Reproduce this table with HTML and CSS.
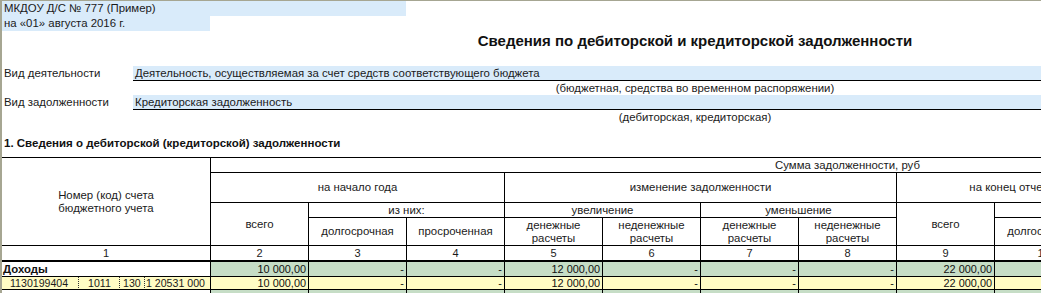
FILE: index.html
```html
<!DOCTYPE html>
<html lang="ru">
<head>
<meta charset="utf-8">
<title>Сведения по дебиторской и кредиторской задолженности</title>
<link rel="stylesheet" href="styles.css">
</head>
<body>
<div class="band band-org">МКДОУ Д/С № 777 (Пример)</div>
<div class="band band-date">на «01» августа 2016 г.</div>
<h1 class="title">Сведения по дебиторской и кредиторской задолженности</h1>
<div class="field-row">
  <span class="field-label">Вид деятельности</span>
  <span class="field-value">Деятельность, осуществляемая за счет средств соответствующего бюджета</span>
</div>
<div class="caption">(бюджетная, средства во временном распоряжении)</div>
<div class="field-row">
  <span class="field-label">Вид задолженности</span>
  <span class="field-value">Кредиторская задолженность</span>
</div>
<div class="caption">(дебиторская, кредиторская)</div>
<h2 class="section">1. Сведения о дебиторской (кредиторской) задолженности</h2>

<div class="grid">
  <!-- header row 1 -->
  <div class="cell rs4">Номер (код) счета<br>бюджетного учета</div>
  <div class="cell cs13">Сумма задолженности, руб</div>
  <!-- header row 2 -->
  <div class="cell cs3">на начало года</div>
  <div class="cell cs4">изменение задолженности</div>
  <div class="cell cs3">на конец отчетного периода</div>
  <div class="cell cs3 rs3"></div>
  <!-- header row 3 -->
  <div class="cell rs2">всего</div>
  <div class="cell cs2">из них:</div>
  <div class="cell cs2">увеличение</div>
  <div class="cell cs2">уменьшение</div>
  <div class="cell rs2">всего</div>
  <div class="cell cs2">из них:</div>
  <!-- header row 4 -->
  <div class="cell">долгосрочная</div>
  <div class="cell">просроченная</div>
  <div class="cell">денежные<br>расчеты</div>
  <div class="cell">неденежные<br>расчеты</div>
  <div class="cell">денежные<br>расчеты</div>
  <div class="cell">неденежные<br>расчеты</div>
  <div class="cell">долгосрочная</div>
  <div class="cell">просроченная</div>
  <!-- column numbers -->
  <div class="cell idx">1</div>
  <div class="cell idx">2</div>
  <div class="cell idx">3</div>
  <div class="cell idx">4</div>
  <div class="cell idx">5</div>
  <div class="cell idx">6</div>
  <div class="cell idx">7</div>
  <div class="cell idx">8</div>
  <div class="cell idx">9</div>
  <div class="cell idx">10</div>
  <div class="cell idx">11</div>
  <div class="cell idx">12</div>
  <div class="cell idx">13</div>
  <div class="cell idx">14</div>
  <!-- Доходы -->
  <div class="cell label">Доходы</div>
  <div class="cell num green">10 000,00</div>
  <div class="cell num green">-</div>
  <div class="cell num green">-</div>
  <div class="cell num green">12 000,00</div>
  <div class="cell num green">-</div>
  <div class="cell num green">-</div>
  <div class="cell num green">-</div>
  <div class="cell num green">22 000,00</div>
  <div class="cell num green">-</div>
  <div class="cell num green">-</div>
  <div class="cell num green">-</div>
  <div class="cell num green">-</div>
  <div class="cell num green">-</div>
  <!-- account row -->
  <div class="cell code yellow">
    <span class="code-part code-a">1130199404</span>
    <span class="code-part code-b">1011</span>
    <span class="code-part code-c">130</span>
    <span class="code-part code-d">1 20531 000</span>
  </div>
  <div class="cell num yellow">10 000,00</div>
  <div class="cell num yellow">-</div>
  <div class="cell num yellow">-</div>
  <div class="cell num yellow">12 000,00</div>
  <div class="cell num yellow">-</div>
  <div class="cell num yellow">-</div>
  <div class="cell num yellow">-</div>
  <div class="cell num yellow">22 000,00</div>
  <div class="cell num yellow">-</div>
  <div class="cell num yellow">-</div>
  <div class="cell num yellow">-</div>
  <div class="cell num yellow">-</div>
  <div class="cell num yellow">-</div>
  <!-- next group row (cut off) -->
  <div class="cell label">Расходы</div>
  <div class="cell num green">-</div>
  <div class="cell num green">-</div>
  <div class="cell num green">-</div>
  <div class="cell num green">-</div>
  <div class="cell num green">-</div>
  <div class="cell num green">-</div>
  <div class="cell num green">-</div>
  <div class="cell num green">-</div>
  <div class="cell num green">-</div>
  <div class="cell num green">-</div>
  <div class="cell num green">-</div>
  <div class="cell num green">-</div>
  <div class="cell num green">-</div>
</div>
</body>
</html>
```
FILE: styles.css
```css
html, body {
  margin: 0;
  padding: 0;
  overflow: hidden;
  background: #ffffff;
}

body {
  border-top: 1px solid #a6a692;
  border-left: 2px solid #a6a692;
  font-family: "Liberation Sans", Arial, sans-serif;
  font-size: 11.4px;
  color: #1a1a1a;
}

.band {
  background: #d9ebfa;
  height: 15px;
  line-height: 15px;
  padding-left: 2px;
  box-sizing: border-box;
  white-space: nowrap;
}

.band-org { width: 404px; }
.band-date { width: 208px; }

.title {
  margin: 0;
  height: 35px;
  line-height: 20px;
  font-size: 15px;
  font-weight: bold;
  text-align: center;
  padding-left: 347px;
  box-sizing: border-box;
  color: #111;
  white-space: nowrap;
}

.field-row {
  display: flex;
  height: 15px;
}

.field-label {
  width: 131px;
  flex: none;
  padding-left: 2px;
  box-sizing: border-box;
  line-height: 14px;
  white-space: nowrap;
}

.field-value {
  flex: 1;
  background: #d9ebfa;
  border-bottom: 1px solid #000;
  line-height: 14px;
  padding-left: 2px;
  white-space: nowrap;
  overflow: hidden;
}

.caption {
  height: 14px;
  line-height: 14px;
  text-align: center;
  padding-left: 347px;
  white-space: nowrap;
}

.section {
  margin: 0;
  font-size: 11.5px;
  font-weight: bold;
  height: 33px;
  padding: 12px 0 0 2px;
  line-height: 14px;
  box-sizing: border-box;
  color: #111;
  white-space: nowrap;
}

.grid {
  display: grid;
  grid-template-columns: 209px repeat(13, 98px);
  grid-template-rows: 15px 30px 15px 28px 16px 15px 13px 15px;
  border-top: 1px solid #000;
  width: max-content;
}

.cell {
  border-right: 1px solid #000;
  border-bottom: 1px solid #000;
  box-sizing: border-box;
  display: flex;
  align-items: center;
  justify-content: center;
  text-align: center;
  line-height: 13px;
  overflow: hidden;
  white-space: nowrap;
}

.rs2 { grid-row: span 2; }
.rs3 { grid-row: span 3; }
.rs4 { grid-row: span 4; }
.cs2 { grid-column: span 2; }
.cs3 { grid-column: span 3; }
.cs4 { grid-column: span 4; }
.cs13 { grid-column: span 13; }

.idx {
  border-bottom-width: 2px;
  font-size: 11px;
}

.label {
  justify-content: flex-start;
  padding-left: 1px;
  font-weight: bold;
  color: #111;
}

.num {
  justify-content: flex-end;
  padding-right: 2px;
  color: #111;
  font-size: 10.9px;
}

.green { background: #c6ddc6; }
.yellow { background: #fffcc4; }

.code {
  display: grid;
  grid-template-columns: 77px 41px 25px 65px;
  padding: 0;
  font-size: 10.6px;
}

.code-part {
  display: flex;
  align-items: center;
  justify-content: flex-start;
  box-sizing: border-box;
  border-right: 1px dotted #333;
  overflow: hidden;
}

.code-a { padding-left: 8px; }
.code-b { padding-left: 9px; }
.code-c { padding-left: 3px; }
.code-d { padding-left: 1px; border-right: none; }
```
